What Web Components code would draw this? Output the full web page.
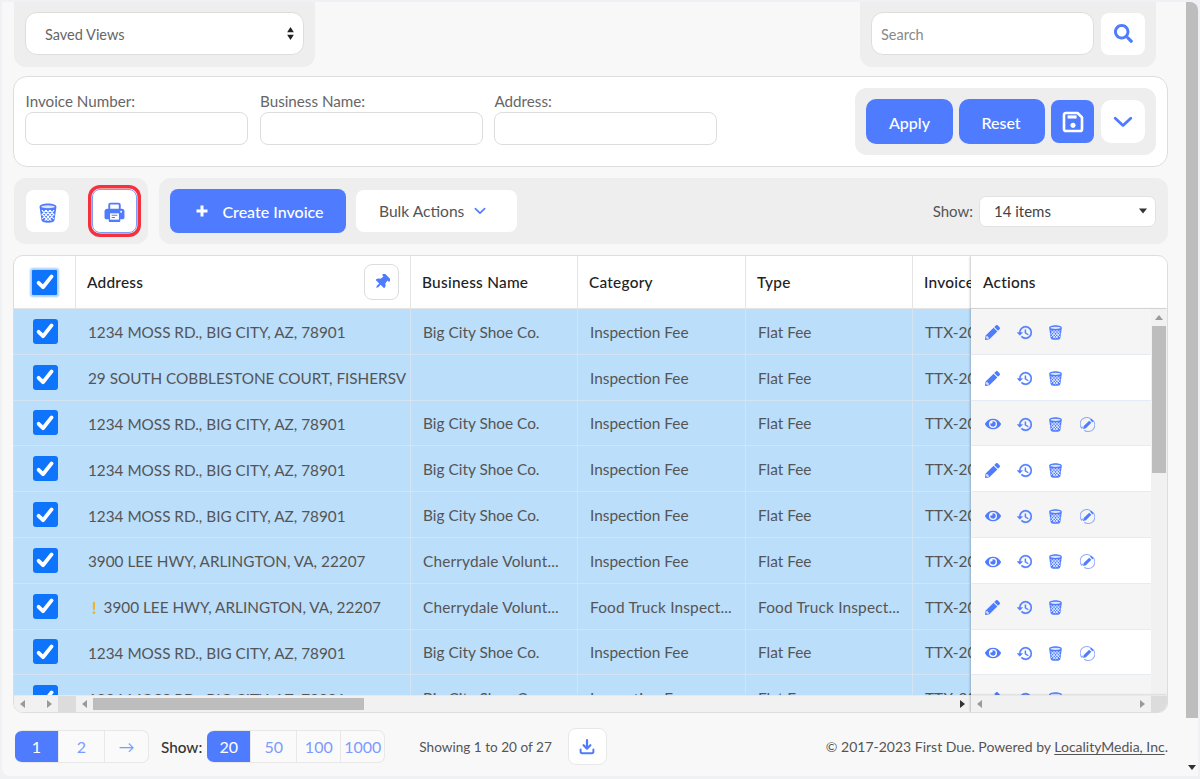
<!DOCTYPE html>
<html lang="en">
<head>
<meta charset="utf-8">
<title>Invoices</title>
<style>
html, body { margin: 0; height: 100%; overflow: hidden; }
body { background: #eff1f4; font-family: "Lato", "Liberation Sans", sans-serif; color: #555; }
</style>
</head>
<body>
<fd-app></fd-app>
<script>
const ICONS = {
	search: `<svg viewBox="0 0 512 512"><path fill="currentColor" d="M505 442.7L405.3 343c-4.5-4.5-10.6-7-17-7H372c27.6-35.3 44-79.7 44-128C416 93.1 322.9 0 208 0S0 93.1 0 208s93.1 208 208 208c48.3 0 92.7-16.4 128-44v16.3c0 6.4 2.5 12.5 7 17l99.7 99.7c9.4 9.4 24.6 9.4 33.9 0l28.3-28.3c9.4-9.4 9.4-24.6.1-34zM208 336c-70.7 0-128-57.2-128-128 0-70.7 57.2-128 128-128 70.7 0 128 57.2 128 128 0 70.7-57.2 128-128 128z"/></svg>`,
	history: `<svg viewBox="1 3 21 18"><path fill="currentColor" stroke="currentColor" stroke-width=".5" d="M13 3a9 9 0 0 0-9 9H1l3.89 3.89.07.14L9 12H6c0-3.87 3.13-7 7-7s7 3.13 7 7-3.130 7-7 7c-1.930 0-3.680-.79-4.940-2.060l-1.420 1.420A8.954 8.954 0 0 0 13 21a9 9 0 0 0 0-18zm-1 5v5l4.280 2.540.72-1.210-3.500-2.080V8H12z"/></svg>`,
	pencil: `<svg viewBox="0 0 512 512"><path fill="currentColor" d="M497.9 142.1l-46.1 46.1c-4.7 4.7-12.3 4.7-17 0l-111-111c-4.7-4.7-4.7-12.3 0-17l46.1-46.1c18.7-18.7 49.1-18.7 67.9 0l60.1 60.1c18.8 18.7 18.8 49.1 0 67.9zM284.2 99.8L21.6 362.4.4 483.9c-2.9 16.4 11.4 30.6 27.8 27.8l121.5-21.3 262.6-262.6c4.7-4.7 4.7-12.3 0-17l-111-111c-4.8-4.7-12.4-4.7-17.1 0zM88 424h48v36.3l-64.5 11.3-31.1-31.1L51.7 376H88v48z"/></svg>`,
	eye: `<svg viewBox="0 0 576 512"><path fill="currentColor" d="M572.52 241.4C518.29 135.59 410.93 64 288 64S57.68 135.64 3.48 241.41a32.35 32.35 0 0 0 0 29.19C57.71 376.41 165.07 448 288 448s230.32-71.64 284.52-177.41a32.35 32.35 0 0 0 0-29.19zM288 400a144 144 0 1 1 144-144 143.93 143.93 0 0 1-144 144zm0-240a95.31 95.31 0 0 0-25.31 3.79 47.85 47.85 0 0 1-66.9 66.9A95.78 95.78 0 1 0 288 160z"/></svg>`,
	pin: `<svg viewBox="0 0 384 512"><g transform="rotate(45 192 256)"><path fill="currentColor" d="M298.028 214.267L285.793 96H328c13.255 0 24-10.745 24-24V24c0-13.255-10.745-24-24-24H56C42.745 0 32 10.745 32 24v48c0 13.255 10.745 24 24 24h42.207L85.972 214.267C37.465 236.82 0 277.261 0 328c0 13.255 10.745 24 24 24h136v104.007c0 1.242.289 2.467.845 3.578l24 48c2.941 5.882 11.364 5.893 14.311 0l24-48a8.008 8.008 0 0 0 .845-3.578V352h136c13.255 0 24-10.745 24-24-.001-51.183-37.983-91.42-85.973-113.733z"/></g></svg>`,
	trash: `<svg viewBox="0 0 16 17"><path fill="currentColor" d="M.8 3.200C.8 1.500 4 .4 8 .4s7.200 1.100 7.200 2.800l-1.700 11.400c-.2 1.400-1.800 2.100-5.500 2.100s-5.300-.7-5.500-2.100z"/><ellipse cx="8" cy="3.200" rx="5.800" ry="1.300" fill="#fff" opacity=".8"/><path d="M2.800 6l8 9M6.200 6l6.800 7.600M9.600 6l3.900 4.400M3.300 9.600l4.500 5.400M13.200 6l-8 9M9.800 6L3 13.600M6.400 6L2.500 10.400M12.700 9.600L8.200 15" stroke="#fff" stroke-width=".9" fill="none"/></svg>`,
	print: `<svg viewBox="0 0 20 20"><path d="M5 8V2.600C5 2 5.500 1.500 6.100 1.500h7.800c.6 0 1.100.5 1.100 1.100V8" fill="none" stroke="currentColor" stroke-width="1.800"/><path fill="currentColor" d="M3 6.500h14c1.400 0 2.500 1.100 2.500 2.500v6c0 .8-.7 1.500-1.500 1.500h-2.500v1.300c0 .7-.5 1.200-1.200 1.200H5.700c-.7 0-1.200-.5-1.200-1.200v-1.300H2c-.8 0-1.500-.7-1.500-1.500V9c0-1.400 1.100-2.500 2.500-2.500z"/><rect x="5.800" y="10.800" width="8.400" height="6" fill="#fff"/><path d="M7.300 12.600h5.400M7.300 14.800h3.200" stroke="currentColor" stroke-width="1"/><circle cx="16.300" cy="9.300" r=".9" fill="#fff"/></svg>`,
	save: `<svg viewBox="0 0 20 20"><path d="M2.500 4C2.500 3.200 3.200 2.500 4 2.500h9.800l3.700 3.700V16c0 .8-.7 1.500-1.500 1.500H4c-.8 0-1.500-.7-1.500-1.500z" fill="none" stroke="currentColor" stroke-width="2.200" stroke-linejoin="round"/><rect x="5.500" y="4.500" width="7.500" height="2.600" fill="currentColor"/><circle cx="10" cy="12.800" r="2.100" fill="currentColor"/></svg>`,
	chevron: `<svg viewBox="0 0 20 12"><path d="M2.200 2.200L10 9.600l7.800-7.400" fill="none" stroke="currentColor" stroke-width="2.800" stroke-linecap="round" stroke-linejoin="round"/></svg>`,
	plus: `<svg viewBox="0 0 12 12"><path d="M6 .5v11M.5 6h11" stroke="currentColor" stroke-width="3" fill="none"/></svg>`,
	edit: `<svg viewBox="0 0 16 16"><path d="M2.200 12.400A7 7 0 0 1 11.400 1.900M13.800 3.600A7 7 0 0 1 4.600 14.100" fill="none" stroke="currentColor" stroke-width="1.100" opacity=".6"/><path d="M1.400 11l2.100 1.600-.2-2.400zM14.600 5l-2.100-1.600.2 2.400z" fill="currentColor" opacity=".6"/><path fill="currentColor" d="M9.800 3.900l2.300 2.300-5.800 5.800-3 .7.700-3zM10.700 3l.8-.8c.3-.3.8-.3 1.100 0l1.200 1.200c.3.3.3.8 0 1.100l-.8.800z"/></svg>`,
	download: `<svg viewBox="0 0 16 16"><path d="M8 1.200v8M4.600 6.200L8 9.600l3.400-3.400" fill="none" stroke="currentColor" stroke-width="2.200" stroke-linecap="round" stroke-linejoin="round"/><path d="M1.600 10.400v2.200c0 1 .7 1.700 1.700 1.700h9.400c1 0 1.700-.7 1.700-1.700v-2.200" fill="none" stroke="currentColor" stroke-width="2" stroke-linecap="round"/></svg>`,
	updown: `<svg viewBox="0 0 8 14"><path fill="currentColor" d="M4 0l3.600 5.600H.4zM4 14L.4 8.400h7.200z"/></svg>`,
	caret: `<svg viewBox="0 0 8 5"><path fill="currentColor" d="M0 0h8L4 5z"/></svg>`,
	check: `<svg viewBox="0 0 24 24"><path d="M5.600 12.800l4.400 4.400 8.600-10.800" fill="none" stroke="currentColor" stroke-width="3.800" stroke-linecap="round" stroke-linejoin="round"/></svg>`,
};

class FdIconElement extends HTMLElement {
	connectedCallback() {
		const size = this.getAttribute("size") || 16;
		this.attachShadow({ mode: "open" });
		this.shadowRoot.innerHTML = /* html */`
		<style>
		:host { display: inline-flex; align-items: center; justify-content: center; flex: none; line-height: 0; color: var(--icon-color, #4f7cff); }
		svg { width: ${size}px; height: ${size}px; display: block; }
		</style>
		${ICONS[this.getAttribute("name")]}`;
	}
}

class FdButtonElement extends HTMLElement {
	constructor() {
		super();
		this.attachShadow({ mode: "open" });
		this.shadowRoot.innerHTML = /* html */`
		<style>
		:host { display: inline-flex; align-items: center; justify-content: center; box-sizing: border-box; flex: none; border-radius: 8px; background: #fff; color: #555; font-size: 16px; }
		:host([primary]) { background: #4f7cff; color: #fff; --icon-color: #fff; }
		</style>
		<slot></slot>`;
	}
}

class FdPanelElement extends HTMLElement {
	constructor() {
		super();
		this.attachShadow({ mode: "open" });
		this.shadowRoot.innerHTML = /* html */`
		<style>
		:host { display: flex; align-items: center; box-sizing: border-box; background: #eee; border-radius: 12px; flex: none; }
		</style>
		<slot></slot>`;
	}
}

class FdFieldElement extends HTMLElement {
	connectedCallback() {
		this.attachShadow({ mode: "open" });
		this.shadowRoot.innerHTML = /* html */`
		<style>
		:host { display: block; width: 223px; font-size: 15.2px; color: #666; }
		label { display: block; height: 20px; line-height: 19px; margin-left: .5px; }
		input { display: block; box-sizing: border-box; width: 100%; height: 33px; border: 1px solid #ddd; border-radius: 8px; background: #fff; }
		</style>
		<label>${this.getAttribute("label")}</label>
		<input type="text">`;
	}
}

class FdScrollbarElement extends HTMLElement {
	connectedCallback() {
		const vertical = this.getAttribute("orient") === "v";
		const start = this.getAttribute("start");
		const size = this.getAttribute("size");
		const thumb = size ? `<i class="thumb"></i>` : "";
		const light = this.hasAttribute("idle") ? "#9a9a9a" : "#333";
		const a = vertical ? ["M0 5L4 0l4 5z", "M0 0h8L4 5z"] : ["M5 0v8L0 4z", "M0 0l5 4-5 4z"];
		const box = vertical ? "0 0 8 5" : "0 0 5 8";
		const dims = vertical ? `width="8" height="5"` : `width="5" height="8"`;
		this.attachShadow({ mode: "open" });
		this.shadowRoot.innerHTML = /* html */`
		<style>
		:host { display: flex; flex-direction: ${vertical ? "column" : "row"}; align-items: center; background: #f1f1f1; min-width: 0; min-height: 0; }
		.arrow { flex: none; display: flex; align-items: center; justify-content: center; ${vertical ? "height: 17px; width: 100%;" : "width: 17px; height: 100%;"} }
		.track { flex: 1; min-width: 0; min-height: 0; align-self: stretch; display: flex; flex-direction: ${vertical ? "column" : "row"}; }
		.thumb { display: block; background: #bdbdbd; flex: none; ${vertical ? `height: ${size}px; margin: ${start}px 1px 0;` : `width: ${size}px; margin: 2px 0 2px ${start}px;`} }
		</style>
		<span class="arrow"><svg ${dims} viewBox="${box}"><path fill="${this.getAttribute("up") || light}" d="${a[0]}"/></svg></span>
		<div class="track">${thumb}</div>
		<span class="arrow"><svg ${dims} viewBox="${box}"><path fill="${light}" d="${a[1]}"/></svg></span>`;
	}
}

class FdCheckElement extends HTMLElement {
	constructor() {
		super();
		this.attachShadow({ mode: "open" });
		this.shadowRoot.innerHTML = /* html */`
		<style>
		:host { display: inline-flex; align-items: center; justify-content: center; width: 25px; height: 25px; border-radius: 3px; background: #0d74fb; --icon-color: #fff; }
		:host([glow]) { box-shadow: 0 0 2px 2px #a9cdfb; border-radius: 1px; }
		</style>
		<fd-icon name="check" size="24"></fd-icon>`;
	}
}

class FdSegmentedElement extends HTMLElement {
	connectedCallback() {
		const widths = this.getAttribute("widths").split(",");
		const active = this.getAttribute("active");
		const cells = this.getAttribute("items").split(",").map((item, i) =>
			`<span class="${i == active ? "on" : ""}" style="width:${widths[i]}px">${item}</span>`).join("");
		this.attachShadow({ mode: "open" });
		this.shadowRoot.innerHTML = /* html */`
		<style>
		:host { display: inline-flex; flex: none; box-sizing: content-box; border: 1px solid #e8e8e8; border-left: 0; border-radius: 7px; overflow: hidden; background: #fafafa; font-size: 16px; height: 31px; }
		span { display: flex; align-items: center; justify-content: center; box-sizing: border-box; color: #7d9bff; border-left: 1px solid #e8e8e8; }
		span.on { background: #4f7cff; color: #fff; border-left: 0; margin: -1px 0; }
		</style>
		${cells}`;
	}
}

class FdTopBarElement extends HTMLElement {
	connectedCallback() {
		this.attachShadow({ mode: "open" });
		this.shadowRoot.innerHTML = /* html */`
		<style>
		:host { display: flex; justify-content: space-between; height: 65px; margin: 0 0 9px 1px; width: 1142px; }
		fd-panel { border-radius: 0 0 12px 12px; height: 65px; padding: 0 11px 2px; }
		.views { width: 301px; }
		.find { width: 296px; gap: 7px; }
		.box { box-sizing: border-box; height: 43px; background: #fff; border: 1px solid #ddd; border-radius: 12px; display: flex; align-items: center; font-size: 14.5px; padding-top: 2px; }
		.select { width: 279px; padding-left: 19px; padding-right: 6px; justify-content: space-between; color: #666; --icon-color: #222; }
		.select fd-icon { margin-top: -3px; }
		.input { width: 223px; padding-left: 9px; color: #888; }
		fd-button { width: 44px; height: 42px; }
		</style>
		<fd-panel class="views"><div class="box select"><span>Saved Views</span><fd-icon name="updown" size="13"></fd-icon></div></fd-panel>
		<fd-panel class="find"><div class="box input">Search</div><fd-button><fd-icon name="search" size="19"></fd-icon></fd-button></fd-panel>`;
	}
}

class FdFilterCardElement extends HTMLElement {
	connectedCallback() {
		this.attachShadow({ mode: "open" });
		this.shadowRoot.innerHTML = /* html */`
		<style>
		:host { display: flex; justify-content: space-between; box-sizing: border-box; width: 1155px; height: 91px; background: #fff; border: 1px solid #ddd; border-radius: 14px; padding: 11px 11px 0 11px; margin-bottom: 11px; }
		.fields { display: flex; gap: 11.5px; padding-top: 4px; }
		fd-panel { width: 301px; height: 67px; padding: 0 11px; gap: 6px; }
		fd-button { height: 45px; border-radius: 10px; }
		.apply, .reset { font-weight: 500; padding-top: 1px; }
		.apply { width: 87px; }
		.reset { width: 86px; padding-right: 2px; }
		.square { width: 43px; height: 43px; border-radius: 8px; }
		.more { width: 44px; height: 43px; margin-left: 1px; }
		</style>
		<div class="fields">
			<fd-field label="Invoice Number:"></fd-field>
			<fd-field label="Business Name:"></fd-field>
			<fd-field label="Address:"></fd-field>
		</div>
		<fd-panel>
			<fd-button primary class="apply">Apply</fd-button>
			<fd-button primary class="reset">Reset</fd-button>
			<fd-button primary class="square"><fd-icon name="save" size="24"></fd-icon></fd-button>
			<fd-button class="more"><fd-icon name="chevron" size="20"></fd-icon></fd-button>
		</fd-panel>`;
	}
}

class FdToolbarElement extends HTMLElement {
	connectedCallback() {
		this.attachShadow({ mode: "open" });
		this.shadowRoot.innerHTML = /* html */`
		<style>
		:host { display: flex; gap: 11px; height: 66px; margin: 0 0 11px 1px; width: 1154px; }
		fd-panel { height: 66px; }
		.left { width: 134px; padding-left: 12px; gap: 23px; }
		.right { flex: 1; padding: 0 12px 0 11px; }
		.trash { width: 43px; height: 42px; padding-top: 3px; }
		.print { width: 45px; height: 44px; padding-top: 3px; border: 1px solid #7f9cf5; box-shadow: 0 0 0 .5px #fff, 0 0 0 4px #f5313f; border-radius: 8px; }
		.create { width: 176px; height: 44px; font-size: 16px; gap: 14px; padding-left: 4px; font-weight: 500; }
		.bulk { width: 161px; height: 42px; margin-left: 10px; gap: 10px; font-size: 15.6px; color: #555; justify-content: flex-start; padding-left: 23px; }
		.spacer { flex: 1; }
		.show { font-size: 15px; color: #555; margin-right: 6px; }
		.select { box-sizing: border-box; width: 177px; height: 31px; background: #fff; border: 1px solid #e2e2e2; border-radius: 7px; display: flex; align-items: center; justify-content: space-between; padding: 0 8px 0 14px; font-size: 15px; color: #444; --icon-color: #333; }
		</style>
		<fd-panel class="left">
			<fd-button class="trash"><fd-icon name="trash" size="20"></fd-icon></fd-button>
			<fd-button class="print"><fd-icon name="print" size="21"></fd-icon></fd-button>
		</fd-panel>
		<fd-panel class="right">
			<fd-button primary class="create"><fd-icon name="plus" size="12"></fd-icon><span>Create Invoice</span></fd-button>
			<fd-button class="bulk"><span>Bulk Actions</span><fd-icon name="chevron" size="12"></fd-icon></fd-button>
			<span class="spacer"></span>
			<span class="show">Show:</span>
			<div class="select"><span>14 items</span><fd-icon name="caret" size="8"></fd-icon></div>
		</fd-panel>`;
	}
}

const ROWS = [
	{ address: "1234 MOSS RD., BIG CITY, AZ, 78901", business: "Big City Shoe Co.", category: "Inspection Fee", type: "Flat Fee", actions: "pencil history trash" },
	{ address: "29 SOUTH COBBLESTONE COURT, FISHERSV", business: "", category: "Inspection Fee", type: "Flat Fee", actions: "pencil history trash" },
	{ address: "1234 MOSS RD., BIG CITY, AZ, 78901", business: "Big City Shoe Co.", category: "Inspection Fee", type: "Flat Fee", actions: "eye history trash edit" },
	{ address: "1234 MOSS RD., BIG CITY, AZ, 78901", business: "Big City Shoe Co.", category: "Inspection Fee", type: "Flat Fee", actions: "pencil history trash" },
	{ address: "1234 MOSS RD., BIG CITY, AZ, 78901", business: "Big City Shoe Co.", category: "Inspection Fee", type: "Flat Fee", actions: "eye history trash edit" },
	{ address: "3900 LEE HWY, ARLINGTON, VA, 22207", business: "Cherrydale Volunt...", category: "Inspection Fee", type: "Flat Fee", actions: "eye history trash edit" },
	{ address: "3900 LEE HWY, ARLINGTON, VA, 22207", warn: true, business: "Cherrydale Volunt...", category: "Food Truck Inspect...", type: "Food Truck Inspect...", actions: "pencil history trash" },
	{ address: "1234 MOSS RD., BIG CITY, AZ, 78901", business: "Big City Shoe Co.", category: "Inspection Fee", type: "Flat Fee", actions: "eye history trash edit" },
	{ address: "1234 MOSS RD., BIG CITY, AZ, 78901", business: "Big City Shoe Co.", category: "Inspection Fee", type: "Flat Fee", actions: "pencil history trash" },
];

class FdInvoiceTableElement extends HTMLElement {
	connectedCallback() {
		const ICON_SIZE = { pencil: 15, history: 15, trash: 15, eye: 16, edit: 15 };
		const cell = (text) => `<div class="cell ${text.endsWith("...") ? "cut" : ""}">${text}</div>`;
		const checks = ROWS.map(() => `<div class="row check"><fd-check></fd-check></div>`).join("");
		const cells = ROWS.map((r) => /* html */`
			<div class="row cols">
				<div class="cell addr">${r.warn ? `<b>!</b>` : ""}${r.address}</div>
				${cell(r.business)}
				${cell(r.category)}
				${cell(r.type)}
				<div class="cell">TTX-20</div>
			</div>`).join("");
		const actions = ROWS.map((r) => `<div class="row acts">${r.actions.split(" ").map((n) =>
			`<span class="act"><fd-icon name="${n}" size="${ICON_SIZE[n]}"></fd-icon></span>`).join("")}</div>`).join("");

		this.attachShadow({ mode: "open" });
		this.shadowRoot.innerHTML = /* html */`
		<style>
		:host { display: grid; grid-template-columns: 62px 895px 196px; grid-template-rows: 53px 386px 17px; box-sizing: border-box; width: 1155px; height: 458px; background: #fff; border: 1px solid #ddd; border-radius: 10px; overflow: hidden; font-size: 15.4px; }
		.head { display: flex; align-items: center; color: #222; border-bottom: 1px solid #e4e4e4; box-sizing: border-box; }
		.head-check { justify-content: center; border-right: 1px solid #e4e4e4; }
		.clip { overflow: hidden; min-width: 0; min-height: 0; }
		.cols { display: grid; grid-template-columns: 335px 167px 168px 167px 58px; }
		.head.cols { align-items: stretch; }
		.th { display: flex; align-items: center; justify-content: space-between; padding: 0 11px; border-right: 1px solid #e4e4e4; white-space: nowrap; overflow: hidden; font-weight: 500; letter-spacing: .25px; }
		.th:last-child { border-right: 0; }
		.pin { display: flex; align-items: center; justify-content: center; width: 35px; height: 36px; box-sizing: border-box; border: 1px solid #ddd; border-radius: 8px; }
		.row { height: 45.8px; box-sizing: border-box; background: #bbdefb; border-bottom: 1px solid #d4e4f3; }
		.check { display: flex; align-items: center; justify-content: center; }
		.row.cols .cell { display: flex; align-items: center; padding: 1px 12px 0; border-right: 1px solid #d4e4f3; white-space: nowrap; overflow: hidden; color: #555; min-width: 0; }
		.row.cols .addr { font-size: 15.3px; padding-top: 2px; }
		.row.cols .cut { letter-spacing: .17px; }
		.row.cols .cell:last-child { border-right: 0; }
		b { color: #f0b429; font-weight: 900; margin-right: 7px; margin-left: 4px; font-size: 16px; }
		.pane { box-shadow: -1px 0 2px rgba(0,0,0,.22); position: relative; background: #fff; }
		.actions-body { display: grid; grid-template-columns: 180px 16px; }
		.acts { background: #fff; display: flex; align-items: center; padding: 3px 0 0 13.5px; border-bottom: 1px solid #e6eaf4; }
		.acts:nth-child(odd) { background: #f5f5f5; }
		.act { display: flex; justify-content: center; width: 16px; margin-right: 15.7px; }
		.head-actions { padding-left: 12px; font-weight: 500; letter-spacing: .25px; }
		.hbar { background: #f1f1f1; display: flex; border-top: 1px solid #e8e8e8; box-sizing: border-box; }
		.corner { background: #dcdcdc; }
		</style>
		<div class="head head-check"><fd-check glow></fd-check></div>
		<div class="head cols clip">
			<div class="th">Address<span class="pin"><fd-icon name="pin" size="16"></fd-icon></span></div>
			<div class="th">Business Name</div>
			<div class="th">Category</div>
			<div class="th">Type</div>
			<div class="th">Invoice Number</div>
		</div>
		<div class="head head-actions pane">Actions</div>
		<div class="clip">${checks}</div>
		<div class="clip">${cells}</div>
		<div class="clip pane actions-body">
			<div>${actions}</div>
			<fd-scrollbar orient="v" start="0" size="147" up="#9a9a9a"></fd-scrollbar>
		</div>
		<div class="hbar">
			<fd-scrollbar idle style="width:44px"></fd-scrollbar>
			<span class="corner" style="width:18px"></span>
		</div>
		<div class="hbar"><fd-scrollbar start="0" size="271" up="#9a9a9a" style="width:895px;background:none"></fd-scrollbar></div>
		<div class="hbar pane">
			<fd-scrollbar idle style="width:180px;background:none"></fd-scrollbar>
			<span class="corner" style="width:16px"></span>
		</div>`;
	}
}

class FdFooterBarElement extends HTMLElement {
	connectedCallback() {
		this.attachShadow({ mode: "open" });
		this.shadowRoot.innerHTML = /* html */`
		<style>
		:host { display: flex; align-items: center; height: 63px; padding: 4px 0 0 2px; box-sizing: border-box; width: 1155px; font-size: 14px; color: #555; }
		.show { margin: 0 5px 0 12px; font-size: 15.3px; font-weight: 500; color: #333; }
		.count { margin-left: 34px; font-size: 13.6px; }
		.dl { width: 39px; height: 37px; margin-left: 16px; background: #fff; border: 1px solid #e8e8e8; border-radius: 8px; }
		.copy { margin-left: auto; }
		u { text-underline-offset: 2px; }
		</style>
		<fd-segmented items="1,2,→" widths="43,46,44" active="0"></fd-segmented>
		<span class="show">Show:</span>
		<fd-segmented items="20,50,100,1000" widths="43,46,44,44" active="0"></fd-segmented>
		<span class="count">Showing 1 to 20 of 27</span>
		<fd-button class="dl"><fd-icon name="download" size="16"></fd-icon></fd-button>
		<span class="copy">© 2017-2023 First Due. Powered by <u>LocalityMedia, Inc</u>.</span>`;
	}
}

class FdAppElement extends HTMLElement {
	connectedCallback() {
		this.attachShadow({ mode: "open" });
		this.shadowRoot.innerHTML = /* html */`
		<style>
		:host { display: grid; grid-template-columns: 1184px 12px; height: 774px; margin: 2px 2px 3px 2px; background: #f8f8f8; border-radius: 0 8px 0 8px; overflow: hidden; }
		main { padding-left: 11px; box-sizing: border-box; width: 1184px; }
		.page-bar { background: #f8f8f8; display: flex; flex-direction: column; }
		.page-thumb { height: 716px; background: #bdbdbd; }
		.page-end { margin-top: auto; height: 18px; display: flex; align-items: center; justify-content: center; }
		</style>
		<main>
			<fd-top-bar></fd-top-bar>
			<fd-filter-card></fd-filter-card>
			<fd-toolbar></fd-toolbar>
			<fd-invoice-table></fd-invoice-table>
			<fd-footer-bar></fd-footer-bar>
		</main>
		<div class="page-bar">
			<div class="page-thumb"></div>
			<div class="page-end"><svg width="8" height="5" viewBox="0 0 8 5"><path fill="#333" d="M0 0h8L4 5z"/></svg></div>
		</div>`;
	}
}

customElements.define("fd-icon", FdIconElement);
customElements.define("fd-button", FdButtonElement);
customElements.define("fd-panel", FdPanelElement);
customElements.define("fd-field", FdFieldElement);
customElements.define("fd-scrollbar", FdScrollbarElement);
customElements.define("fd-check", FdCheckElement);
customElements.define("fd-segmented", FdSegmentedElement);
customElements.define("fd-top-bar", FdTopBarElement);
customElements.define("fd-filter-card", FdFilterCardElement);
customElements.define("fd-toolbar", FdToolbarElement);
customElements.define("fd-invoice-table", FdInvoiceTableElement);
customElements.define("fd-footer-bar", FdFooterBarElement);
customElements.define("fd-app", FdAppElement);
</script>
</body>
</html>
